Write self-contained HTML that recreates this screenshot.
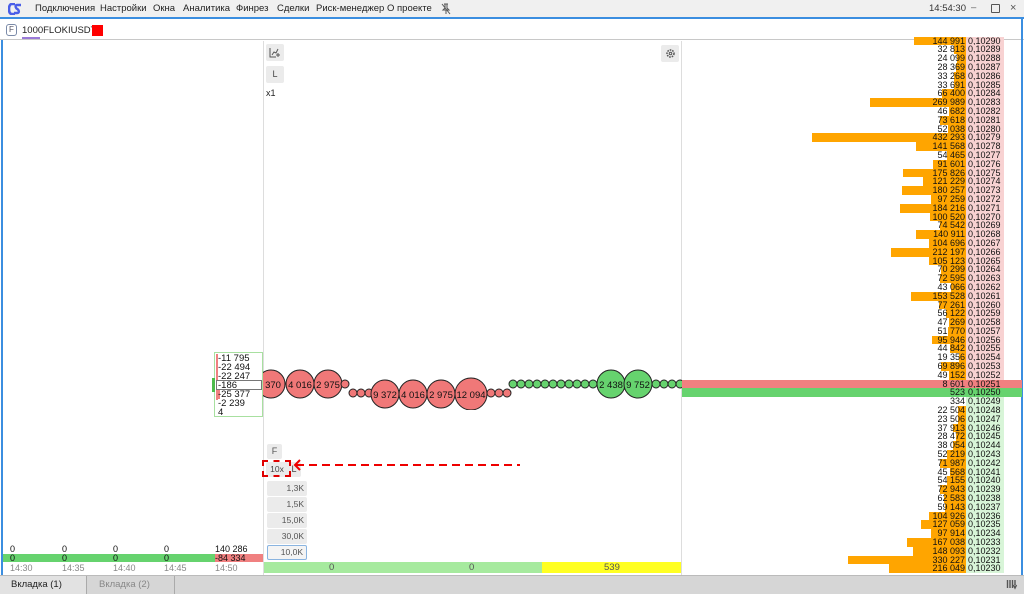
<!DOCTYPE html>
<html><head><meta charset="utf-8">
<style>
*{margin:0;padding:0;box-sizing:border-box}
body{width:1024px;height:594px;overflow:hidden;background:#fff;font-family:"Liberation Sans",sans-serif;position:relative}
.abs{position:absolute}
#title{left:0;top:0;width:1024px;height:19px;background:#f0f0f0;border-bottom:2px solid #3b8ee0}
#title span.m{position:absolute;top:3px;font-size:9.5px;color:#222}
#tabrow{left:0;top:19px;width:1024px;height:21px;background:#fff;border-bottom:1px solid #c8c8c8}
#ob{left:682px;top:36.6px;width:340px;height:538px;overflow:hidden}
.r{position:relative;height:8.8px;font-size:9px;line-height:8.8px;color:#111}
.r .b{position:absolute;right:56px;top:0;height:8.8px;background:#ffa500}
.r .v{position:absolute;right:57px;top:0;white-space:nowrap}
.r .p{position:absolute;left:284px;top:0;width:38px;height:8.8px;padding-left:2px}
.a .p{background:#f8d2d2}
.g .p{background:#d8f5d8}
.R{background:#f08080}.R .p{background:#f08080}
.G{background:#66d36e}.G .p{background:#66d36e}
.btn{position:absolute;background:#ebebeb;border-radius:2px;font-size:8.5px;color:#555;text-align:right;padding-right:3px;line-height:15px;height:15px}
.lad{position:absolute;left:218px;font-size:9.5px;color:#111;line-height:9px}
</style></head><body>
<div id="title" class="abs">
 <svg class="abs" style="left:8px;top:3px" width="14" height="12" viewBox="0 0 14 12"><path d="M7 1H4C2 1 1 3 1 6s1 5 3 5h3" stroke="#4a5ee8" stroke-width="2.6" fill="none"/><path d="M13 2H9C7.5 2 7 3.5 8.5 5.5L10 6.5c1.5 2 1 3.5-1 3.5H6" stroke="#4a5ee8" stroke-width="2.4" fill="none"/></svg>
 <span class="m" style="left:35px">Подключения</span>
 <span class="m" style="left:100px">Настройки</span>
 <span class="m" style="left:153px">Окна</span>
 <span class="m" style="left:183px">Аналитика</span>
 <span class="m" style="left:236px">Финрез</span>
 <span class="m" style="left:277px">Сделки</span>
 <span class="m" style="left:316px">Риск-менеджер</span>
 <span class="m" style="left:387px">О проекте</span>
 <svg class="abs" style="left:441px;top:3px" width="10" height="12" viewBox="0 0 10 12"><path d="M3 1h4M4 1v4L2 7h6L6 5V1M5 7v4M1 1l8 10" stroke="#555" stroke-width="1" fill="none"/></svg>
 <span class="m" style="left:929px;color:#333">14:54:30</span>
 <span class="m" style="left:971px;top:2px;color:#555">–</span>
 <div class="abs" style="left:991px;top:4px;width:9px;height:9px;border:1px solid #555;border-radius:1px"></div>
 <span class="m" style="left:1010px;top:2px;color:#555;font-size:11px">×</span>
</div>
<div id="tabrow" class="abs">
 <div class="abs" style="left:6px;top:5px;width:11px;height:12px;border:1px solid #7a8aa8;border-radius:3px;font-size:8px;line-height:10px;text-align:center;color:#556">F</div>
 <span class="abs" style="left:22px;top:6px;font-size:9.5px;color:#222">1000FLOKIUSDT</span>
 <div class="abs" style="left:22px;top:18px;width:18px;height:2px;background:#9a7ad8"></div>
 <div class="abs" style="left:92px;top:6px;width:11px;height:11px;background:#ff0000"></div>
</div>
<div class="abs" style="left:1px;top:40px;width:2px;height:535px;background:#3b8ee0"></div>
<div class="abs" style="left:1021px;top:19px;width:2px;height:556px;background:#3b8ee0"></div>
<div class="abs" style="left:263px;top:41px;width:1px;height:534px;background:#ddd"></div>
<div class="abs" style="left:681px;top:41px;width:1px;height:534px;background:#ddd"></div>

<!-- middle buttons -->
<div class="abs" style="left:266px;top:44px;width:18px;height:17px;background:#ebebeb;border-radius:2px"></div>
<svg class="abs" style="left:269px;top:47px" width="12" height="11" viewBox="0 0 12 11"><path d="M1 1v9h6M3 8l2-3 2 1 2-4M9 6v4M7 8h4" stroke="#555" stroke-width="1" fill="none"/></svg>
<div class="abs" style="left:266px;top:66px;width:18px;height:17px;background:#ebebeb;border-radius:2px;font-size:9px;text-align:center;line-height:17px;color:#444">L</div>
<span class="abs" style="left:266px;top:88px;font-size:9px;color:#222">x1</span>
<div class="abs" style="left:661px;top:45px;width:18px;height:17px;background:#ebebeb;border-radius:2px"></div>
<svg class="abs" style="left:665px;top:48px" width="11" height="11" viewBox="0 0 11 11"><circle cx="5.5" cy="5.5" r="3.5" stroke="#555" stroke-width="1.5" fill="none" stroke-dasharray="1.6 1"/><circle cx="5.5" cy="5.5" r="1.3" stroke="#555" fill="none"/></svg>

<!-- bubbles -->
<svg class="abs" style="left:263px;top:360px" width="419" height="50" viewBox="263 360 419 50">
<g stroke="#222" stroke-width="1" fill="#f07878" font-family="Liberation Sans" font-size="9.5" text-anchor="middle">
<circle cx="271" cy="384" r="14"/><circle cx="300" cy="384" r="14"/><circle cx="328" cy="384" r="14"/>
<circle cx="345" cy="384" r="4"/><circle cx="353" cy="393" r="4"/><circle cx="361" cy="393" r="4"/><circle cx="369" cy="393" r="4"/>
<circle cx="385" cy="394" r="14"/><circle cx="413" cy="394" r="14"/><circle cx="441" cy="394" r="14"/><circle cx="471" cy="394" r="16"/>
<circle cx="491" cy="393" r="4"/><circle cx="499" cy="393" r="4"/><circle cx="507" cy="393" r="4"/>
</g>
<g fill="#111" font-family="Liberation Sans" font-size="9.5" text-anchor="middle">
<text x="273" y="388">370</text><text x="300" y="388">4 016</text><text x="328" y="388">2 975</text>
<text x="385" y="398">9 372</text><text x="413" y="398">4 016</text><text x="441" y="398">2 975</text><text x="471" y="398">12 094</text>
</g>
<g stroke="#222" stroke-width="1" fill="#66d36e">
<circle cx="513" cy="384" r="4"/><circle cx="521" cy="384" r="4"/><circle cx="529" cy="384" r="4"/><circle cx="537" cy="384" r="4"/><circle cx="545" cy="384" r="4"/><circle cx="553" cy="384" r="4"/><circle cx="561" cy="384" r="4"/><circle cx="569" cy="384" r="4"/><circle cx="577" cy="384" r="4"/><circle cx="585" cy="384" r="4"/><circle cx="593" cy="384" r="4"/>
<circle cx="611" cy="384" r="14"/><circle cx="638" cy="384" r="14"/>
<circle cx="656" cy="384" r="4"/><circle cx="664" cy="384" r="4"/><circle cx="672" cy="384" r="4"/><circle cx="680" cy="384" r="4"/>
</g>
<g fill="#111" font-family="Liberation Sans" font-size="9.5" text-anchor="middle"><text x="611" y="388">2 438</text><text x="638" y="388">9 752</text></g>
</svg>

<!-- left ladder -->
<div class="abs" style="left:214px;top:352px;width:49px;height:65px;border:1px solid #a8e0a0"></div>
<div class="abs" style="left:216px;top:354px;width:2px;height:46px;background:#f08080"></div>
<div class="abs" style="left:216px;top:390px;width:4px;height:9px;background:#f08080"></div>
<div class="abs" style="left:212px;top:378px;width:3px;height:14px;background:#4cbb4c"></div>
<div class="abs" style="left:216px;top:380px;width:46px;height:10px;border:1px solid #777;background:#fff"></div>
<div class="lad" style="top:354px">-11 795</div>
<div class="lad" style="top:363px">-22 494</div>
<div class="lad" style="top:372px">-22 247</div>
<div class="lad" style="top:381px">-186</div>
<div class="lad" style="top:390px">-25 377</div>
<div class="lad" style="top:399px">-2 239</div>
<div class="lad" style="top:408px">4</div>

<!-- lower middle buttons -->
<div class="btn" style="left:267px;top:444px;width:15px;text-align:center;padding:0;font-size:9px">F</div>
<div class="btn" style="left:287px;top:462px;width:14px;text-align:center;padding:0;font-size:9px;color:#444">L</div>
<div class="btn" style="left:266px;top:462px;width:22px;text-align:center;padding:0;font-size:8.5px;color:#444">10x</div>
<div class="abs" style="left:262px;top:460px;width:29px;height:17px;border:2px dashed #e00000"></div>
<svg class="abs" style="left:290px;top:458px" width="232" height="14" viewBox="290 458 232 14"><path d="M300 460l-5 5 5 5" stroke="#e00" stroke-width="2" fill="none"/><path d="M296 465H520" stroke="#e00" stroke-width="2" stroke-dasharray="8 5"/></svg>
<div class="btn" style="left:267px;top:481px;width:40px">1,3K</div>
<div class="btn" style="left:267px;top:497px;width:40px">1,5K</div>
<div class="btn" style="left:267px;top:513px;width:40px">15,0K</div>
<div class="btn" style="left:267px;top:529px;width:40px">30,0K</div>
<div class="btn" style="left:267px;top:545px;width:40px;background:#f4f4f4;border:1px solid #8ab4e0;line-height:13px">10,0K</div>
<div class="abs" style="left:264px;top:562px;width:278px;height:11px;background:#a6ea9e"></div>
<div class="abs" style="left:542px;top:562px;width:139px;height:11px;background:#ffff22"></div>
<span class="abs" style="left:329px;top:562px;font-size:9.5px;color:#555">0</span>
<span class="abs" style="left:469px;top:562px;font-size:9.5px;color:#555">0</span>
<span class="abs" style="left:604px;top:562px;font-size:9.5px;color:#555">539</span>

<!-- left bottom -->
<div class="abs" style="left:3px;top:554px;width:212px;height:8px;background:#66d36e"></div>
<div class="abs" style="left:215px;top:554px;width:48px;height:8px;background:#f08080"></div>
<div class="abs" style="top:545px;left:0;font-size:9px;line-height:9px;color:#111">
<span class="abs" style="left:10px">0</span><span class="abs" style="left:62px">0</span><span class="abs" style="left:113px">0</span><span class="abs" style="left:164px">0</span><span class="abs" style="left:215px;white-space:nowrap">140 286</span></div>
<div class="abs" style="top:554px;left:0;font-size:9px;line-height:9px;color:#111">
<span class="abs" style="left:10px">0</span><span class="abs" style="left:62px">0</span><span class="abs" style="left:113px">0</span><span class="abs" style="left:164px">0</span><span class="abs" style="left:215px;white-space:nowrap">-84 334</span></div>
<div class="abs" style="top:564px;left:0;font-size:9px;line-height:9px;color:#888">
<span class="abs" style="left:10px">14:30</span><span class="abs" style="left:62px">14:35</span><span class="abs" style="left:113px">14:40</span><span class="abs" style="left:164px">14:45</span><span class="abs" style="left:215px">14:50</span></div>

<!-- bottom tabs -->
<div class="abs" style="left:0;top:575px;width:1024px;height:19px;background:#d6d6d6;border-top:1px solid #bbb"></div>
<div class="abs" style="left:0;top:576px;width:87px;height:18px;background:#e2e2e2;border-right:1px solid #aaa;font-size:9.5px;line-height:17px;padding-left:11px;color:#222">Вкладка (1)</div>
<div class="abs" style="left:87px;top:576px;width:88px;height:18px;border-right:1px solid #aaa;font-size:9.5px;line-height:17px;padding-left:12px;color:#888">Вкладка (2)</div>
<svg class="abs" style="left:1006px;top:579px" width="12" height="11" viewBox="0 0 12 11"><path d="M1.5 1v8M4 1v8M6.5 1v8M9 1v5M7.5 6l1.5 3 1.5-3" stroke="#555" stroke-width="1.4" fill="none"/></svg>

<!-- order book -->
<div id="ob" class="abs">
<div class="r a"><div class="b" style="width:51.6px"></div><span class="v">144 991</span><span class="p">0,10290</span></div>
<div class="r a"><div class="b" style="width:11.7px"></div><span class="v">32 813</span><span class="p">0,10289</span></div>
<div class="r a"><div class="b" style="width:8.6px"></div><span class="v">24 099</span><span class="p">0,10288</span></div>
<div class="r a"><div class="b" style="width:10.1px"></div><span class="v">28 369</span><span class="p">0,10287</span></div>
<div class="r a"><div class="b" style="width:11.8px"></div><span class="v">33 268</span><span class="p">0,10286</span></div>
<div class="r a"><div class="b" style="width:12px"></div><span class="v">33 691</span><span class="p">0,10285</span></div>
<div class="r a"><div class="b" style="width:23.6px"></div><span class="v">66 400</span><span class="p">0,10284</span></div>
<div class="r a"><div class="b" style="width:96.1px"></div><span class="v">269 989</span><span class="p">0,10283</span></div>
<div class="r a"><div class="b" style="width:16.6px"></div><span class="v">46 682</span><span class="p">0,10282</span></div>
<div class="r a"><div class="b" style="width:26.2px"></div><span class="v">73 618</span><span class="p">0,10281</span></div>
<div class="r a"><div class="b" style="width:18.5px"></div><span class="v">52 038</span><span class="p">0,10280</span></div>
<div class="r a"><div class="b" style="width:153.9px"></div><span class="v">432 293</span><span class="p">0,10279</span></div>
<div class="r a"><div class="b" style="width:50.4px"></div><span class="v">141 568</span><span class="p">0,10278</span></div>
<div class="r a"><div class="b" style="width:19.4px"></div><span class="v">54 465</span><span class="p">0,10277</span></div>
<div class="r a"><div class="b" style="width:32.6px"></div><span class="v">91 601</span><span class="p">0,10276</span></div>
<div class="r a"><div class="b" style="width:62.6px"></div><span class="v">175 826</span><span class="p">0,10275</span></div>
<div class="r a"><div class="b" style="width:43.2px"></div><span class="v">121 229</span><span class="p">0,10274</span></div>
<div class="r a"><div class="b" style="width:64.2px"></div><span class="v">180 257</span><span class="p">0,10273</span></div>
<div class="r a"><div class="b" style="width:34.6px"></div><span class="v">97 259</span><span class="p">0,10272</span></div>
<div class="r a"><div class="b" style="width:65.6px"></div><span class="v">184 216</span><span class="p">0,10271</span></div>
<div class="r a"><div class="b" style="width:35.8px"></div><span class="v">100 520</span><span class="p">0,10270</span></div>
<div class="r a"><div class="b" style="width:26.5px"></div><span class="v">74 542</span><span class="p">0,10269</span></div>
<div class="r a"><div class="b" style="width:50.2px"></div><span class="v">140 911</span><span class="p">0,10268</span></div>
<div class="r a"><div class="b" style="width:37.3px"></div><span class="v">104 696</span><span class="p">0,10267</span></div>
<div class="r a"><div class="b" style="width:75.5px"></div><span class="v">212 197</span><span class="p">0,10266</span></div>
<div class="r a"><div class="b" style="width:37.4px"></div><span class="v">105 123</span><span class="p">0,10265</span></div>
<div class="r a"><div class="b" style="width:25px"></div><span class="v">70 299</span><span class="p">0,10264</span></div>
<div class="r a"><div class="b" style="width:25.8px"></div><span class="v">72 595</span><span class="p">0,10263</span></div>
<div class="r a"><div class="b" style="width:15.3px"></div><span class="v">43 066</span><span class="p">0,10262</span></div>
<div class="r a"><div class="b" style="width:54.7px"></div><span class="v">153 528</span><span class="p">0,10261</span></div>
<div class="r a"><div class="b" style="width:27.5px"></div><span class="v">77 261</span><span class="p">0,10260</span></div>
<div class="r a"><div class="b" style="width:20px"></div><span class="v">56 122</span><span class="p">0,10259</span></div>
<div class="r a"><div class="b" style="width:16.8px"></div><span class="v">47 269</span><span class="p">0,10258</span></div>
<div class="r a"><div class="b" style="width:18.4px"></div><span class="v">51 770</span><span class="p">0,10257</span></div>
<div class="r a"><div class="b" style="width:34.2px"></div><span class="v">95 946</span><span class="p">0,10256</span></div>
<div class="r a"><div class="b" style="width:16px"></div><span class="v">44 842</span><span class="p">0,10255</span></div>
<div class="r a"><div class="b" style="width:6.9px"></div><span class="v">19 356</span><span class="p">0,10254</span></div>
<div class="r a"><div class="b" style="width:24.9px"></div><span class="v">69 896</span><span class="p">0,10253</span></div>
<div class="r a"><div class="b" style="width:17.5px"></div><span class="v">49 152</span><span class="p">0,10252</span></div>
<div class="r R"><span class="v">8 601</span><span class="p">0,10251</span></div>
<div class="r G"><span class="v">523</span><span class="p">0,10250</span></div>
<div class="r g"><span class="v">334</span><span class="p">0,10249</span></div>
<div class="r g"><div class="b" style="width:8px"></div><span class="v">22 504</span><span class="p">0,10248</span></div>
<div class="r g"><div class="b" style="width:8.4px"></div><span class="v">23 506</span><span class="p">0,10247</span></div>
<div class="r g"><div class="b" style="width:13.5px"></div><span class="v">37 913</span><span class="p">0,10246</span></div>
<div class="r g"><div class="b" style="width:10.1px"></div><span class="v">28 472</span><span class="p">0,10245</span></div>
<div class="r g"><div class="b" style="width:13.5px"></div><span class="v">38 054</span><span class="p">0,10244</span></div>
<div class="r g"><div class="b" style="width:18.6px"></div><span class="v">52 219</span><span class="p">0,10243</span></div>
<div class="r g"><div class="b" style="width:25.6px"></div><span class="v">71 987</span><span class="p">0,10242</span></div>
<div class="r g"><div class="b" style="width:16.2px"></div><span class="v">45 568</span><span class="p">0,10241</span></div>
<div class="r g"><div class="b" style="width:19.3px"></div><span class="v">54 155</span><span class="p">0,10240</span></div>
<div class="r g"><div class="b" style="width:26px"></div><span class="v">72 943</span><span class="p">0,10239</span></div>
<div class="r g"><div class="b" style="width:22.3px"></div><span class="v">62 583</span><span class="p">0,10238</span></div>
<div class="r g"><div class="b" style="width:21.1px"></div><span class="v">59 143</span><span class="p">0,10237</span></div>
<div class="r g"><div class="b" style="width:37.4px"></div><span class="v">104 926</span><span class="p">0,10236</span></div>
<div class="r g"><div class="b" style="width:45.2px"></div><span class="v">127 059</span><span class="p">0,10235</span></div>
<div class="r g"><div class="b" style="width:34.9px"></div><span class="v">97 914</span><span class="p">0,10234</span></div>
<div class="r g"><div class="b" style="width:59.5px"></div><span class="v">167 038</span><span class="p">0,10233</span></div>
<div class="r g"><div class="b" style="width:52.7px"></div><span class="v">148 093</span><span class="p">0,10232</span></div>
<div class="r g"><div class="b" style="width:117.6px"></div><span class="v">330 227</span><span class="p">0,10231</span></div>
<div class="r g"><div class="b" style="width:76.9px"></div><span class="v">216 049</span><span class="p">0,10230</span></div>
</div>
</body></html>
